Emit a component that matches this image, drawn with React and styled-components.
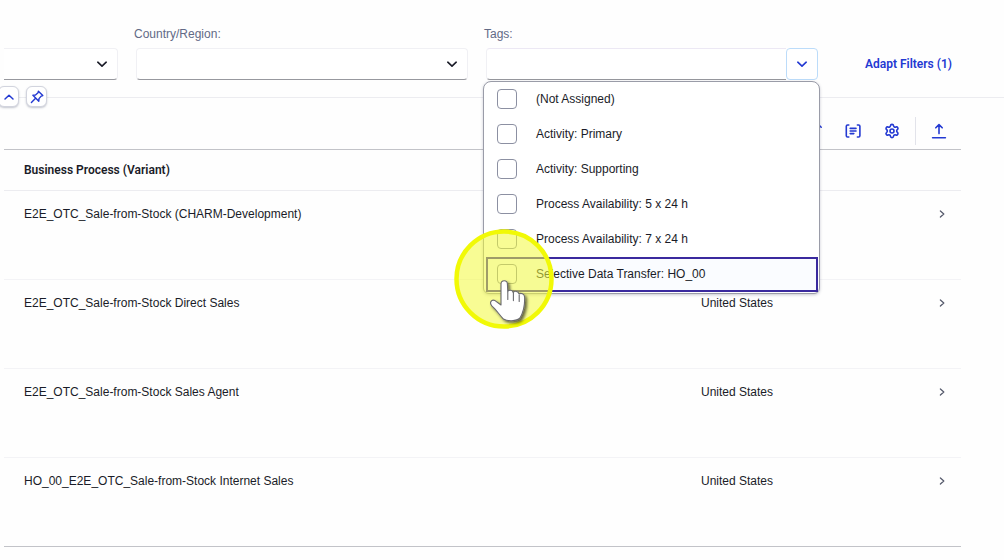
import React from "react";
import styled, { createGlobalStyle, css } from "styled-components";
import { Settings } from "lucide-react";

const color = {
  text: "#1a1c28",
  label: "#626a86",
  blue: "#2339d2",
  line: "#ececf0",
  strong: "#c2c3c8",
};

const strongFont = 'Roboto, "Liberation Sans", sans-serif';

const GlobalStyle = createGlobalStyle`
  *, *::before, *::after { box-sizing: border-box; }
  body {
    margin: 0;
    background: #fefefe;
    color: ${color.text};
    font: 12px/16px "Liberation Sans", Arial, sans-serif;
  }
  button, input, select { font: inherit; color: inherit; margin: 0; padding: 0; }
`;

const Page = styled.main`
  padding-left: 4px;
  overflow: hidden;
`;

const FilterBar = styled.form`
  position: relative;
  display: grid;
  grid-template-columns: 114px 1fr 1fr 168px;
  column-gap: 18px;
  align-items: end;
  padding: 26px 0 17px;
  border-bottom: 1px solid ${color.line};
`;

const Field = styled.div`
  display: flex;
  flex-direction: column;
  gap: 6px;
`;

const Label = styled.label`
  margin-left: -2px;
  color: ${color.label};
`;

const Control = styled.div`
  position: relative;
  display: flex;
  height: 32px;
`;

const box = css`
  flex: 1;
  min-width: 0;
  height: 32px;
  appearance: none;
  background: #fff;
  border: 1px solid #f0f0f4;
  border-bottom-color: #97989e;
  border-radius: 4px;
  outline: none;
`;

const Select = styled.select`
  ${box}
  ${(p) => p.$cut && "border-left: 0; border-radius: 0 4px 4px 0;"}
`;

const TextInput = styled.input`
  ${box}
  border-top-color: #ece8f4;
  border-radius: 4px 0 0 4px;
  border-right: 0;
`;

const ArrowButton = styled.button`
  display: grid;
  place-items: center;
  width: 32px;
  height: 32px;
  background: #fff;
  border: 1px solid #bcdcfa;
  border-radius: 4px;
  color: ${color.blue};
`;

const LinkButton = styled.button`
  justify-self: start;
  height: 32px;
  margin-left: 29px;
  border: 0;
  background: none;
  color: ${color.blue};
  font-family: ${strongFont};
  font-weight: 600;
  white-space: nowrap;
`;

const HeaderToggles = styled.div`
  position: absolute;
  left: -6px;
  bottom: -10px;
  display: flex;
  gap: 7px;
`;

const ToggleButton = styled.button`
  display: grid;
  place-items: center;
  width: 21px;
  height: 21px;
  border: 1px solid #d2d4de;
  border-radius: 6px;
  background: #fff;
  box-shadow: 0 1px 2px rgba(60, 70, 100, 0.3);
  color: ${color.blue};
`;

const Popup = styled.ul`
  position: absolute;
  z-index: 2;
  top: 33px;
  left: -3px;
  right: -2px;
  margin: 0;
  padding: 0 1px 1px 2px;
  list-style: none;
  background: #fff;
  border: 1px solid #9a9ca8;
  border-radius: 8px 8px 6px 6px;
  box-shadow: 0 1px 3px rgba(40, 45, 80, 0.25);
`;

const Option = styled.li`
  height: 35px;
  border: 2px solid ${(p) => (p.$focused ? "#3a2a9e" : "transparent")};
  background: ${(p) => (p.$focused ? "#fafcff" : "transparent")};
`;

const OptionLabel = styled.label`
  display: flex;
  align-items: center;
  gap: 19px;
  height: 100%;
  padding: 0 0 2px 9px;
`;

const CheckBox = styled.input`
  appearance: none;
  width: 20px;
  height: 20px;
  border: 1px solid #8c90a2;
  border-radius: 4px;
  background: #fff;
`;

const Pointer = styled.svg`
  position: absolute;
  left: -30px;
  bottom: -36px;
  pointer-events: none;
`;

const TableArea = styled.section`
  margin-right: 43px;
`;

const Toolbar = styled.div`
  display: flex;
  justify-content: flex-end;
  align-items: center;
  height: 52px;
  padding: 14px 11px 0 0;
  border-bottom: 1px solid ${color.strong};
`;

const ToolButton = styled.button`
  display: grid;
  place-items: center;
  width: 22px;
  height: 28px;
  border: 0;
  background: none;
  color: ${color.blue};
  & + & { margin-left: 17px; }
`;

const Divider = styled.span`
  width: 1px;
  height: 28px;
  margin: 0 12px;
  background: #e2e3ea;
`;

const Table = styled.table`
  width: 100%;
  table-layout: fixed;
  border-collapse: separate;
  border-spacing: 0;
`;

const HeadCell = styled.th`
  height: 41px;
  padding: 0 0 0 20px;
  border-bottom: 1px solid ${color.line};
  text-align: left;
  font-family: ${strongFont};
  font-weight: 600;
`;

const Row = styled.tr`
  td { border-bottom: 1px solid #f3f3f6; }
  &:last-child td { border-bottom-color: ${color.strong}; }
`;

const Cell = styled.td`
  height: 89px;
  padding: 15px 0 0;
  vertical-align: top;
  &:first-child { padding-left: 20px; }
`;

const RowButton = styled.button`
  display: grid;
  place-items: center;
  width: 16px;
  height: 16px;
  border: 0;
  background: none;
  color: #565a6c;
`;

const Icon = ({ width, height = width, stroke = 1.5, children, className }) => (
  <svg
    className={className}
    width={width}
    height={height}
    viewBox={`0 0 ${width} ${height}`}
    fill="none"
    stroke="currentColor"
    strokeWidth={stroke}
    strokeLinecap="round"
    strokeLinejoin="round"
    aria-hidden="true"
  >
    {children}
  </svg>
);

const ChevronDown = ({ className }) => (
  <Icon width={12} stroke={1.6} className={className}>
    <path d="M1.8 4.2 6 8.2 10.2 4.2" />
  </Icon>
);

const SelectArrow = styled(ChevronDown)`
  position: absolute;
  right: 10px;
  top: 10px;
  pointer-events: none;
`;

const ChevronUp = () => (
  <Icon width={12} stroke={1.5}>
    <path d="M2 8 6 4.2 10 8" />
  </Icon>
);

const ChevronRight = () => (
  <Icon width={10} stroke={1.3}>
    <path d="M3.4 2 6.8 5 3.4 8" />
  </Icon>
);

const PinIcon = () => (
  <Icon width={14} stroke={1.4}>
    <path d="M8.4 1.2 12.8 5.6 11.2 6.1 9 8.6 8.8 11.2 2.9 5.2 5.5 5 8 2.8Z" />
    <path d="M5.6 8.3 1.4 12.6" />
  </Icon>
);

const SortIcon = () => (
  <Icon width={16}>
    <path d="M4 2v12M1 11l3 3 3-3M12 14V1M8.8 4.2 12 1l3.2 3.2" />
  </Icon>
);

const GroupIcon = () => (
  <Icon width={16} height={14} stroke={1.6}>
    <path d="M3.8 1H2.6Q1.3 1 1.3 2.3v9.4Q1.3 13 2.6 13h1.2M12.4 1h1.2q1.3 0 1.3 1.3v9.4q0 1.3-1.3 1.3h-1.2M5.2 4.4h5.8M5.2 7h5.8M5.2 9.6h3.6" />
  </Icon>
);

const ExportIcon = () => (
  <Icon width={16} stroke={1.6}>
    <path d="M8 10.6V1.6M4.8 4.8 8 1.6l3.2 3.2M1.6 14.7h12.8" />
  </Icon>
);

const HandPointer = () => (
  <Pointer width="100" height="100" viewBox="0 0 100 100" aria-hidden="true">
    <defs>
      <filter id="hand-shadow" x="-30%" y="-30%" width="170%" height="170%">
        <feDropShadow dx="2" dy="2" stdDeviation="1.5" floodColor="#000" floodOpacity="0.6" />
      </filter>
    </defs>
    <circle cx="50" cy="50" r="47.5" fill="#f2fa3c" fillOpacity="0.55" stroke="#f1f906" strokeWidth="4.5" />
    <g filter="url(#hand-shadow)" stroke="#6a6a6e" strokeWidth="1.1" strokeLinejoin="round" strokeLinecap="round">
      <path
        fill="#fff"
        d="M47 55C47 50.6 53.4 50.6 53.4 55L53.8 62.6C54.8 60.4 58.6 60.8 59.2 63.6 60.6 61.4 64.6 62.2 65 65 67 63.6 70.4 64.8 70.6 68 71 77 69.6 83 66 89 62.6 92.4 53 92.4 49.4 90 45.5 86 42 80.5 38 77.2 34.8 73.4 37.6 70 41 71.6L47 76Z"
      />
      <path fill="none" d="M53.8 63v7.4M59.4 64v7.6M65.2 66v6.4" />
    </g>
  </Pointer>
);

const options = [
  "(Not Assigned)",
  "Activity: Primary",
  "Activity: Supporting",
  "Process Availability: 5 x 24 h",
  "Process Availability: 7 x 24 h",
  "Selective Data Transfer: HO_00",
];

const rows = [
  ["E2E_OTC_Sale-from-Stock (CHARM-Development)", ""],
  ["E2E_OTC_Sale-from-Stock Direct Sales", "United States"],
  ["E2E_OTC_Sale-from-Stock Sales Agent", "United States"],
  ["HO_00_E2E_OTC_Sale-from-Stock Internet Sales", "United States"],
];

export default function App() {
  return (
    <>
      <GlobalStyle />
      <Page>
        <FilterBar onSubmit={(e) => e.preventDefault()}>
          <Field>
            <Control>
              <Select $cut aria-label="Filter" />
              <SelectArrow />
            </Control>
          </Field>
          <Field>
            <Label htmlFor="country">Country/Region:</Label>
            <Control>
              <Select id="country" />
              <SelectArrow />
            </Control>
          </Field>
          <Field>
            <Label htmlFor="tags">Tags:</Label>
            <Control>
              <TextInput id="tags" type="text" role="combobox" aria-expanded="true" aria-controls="tag-list" />
              <ArrowButton type="button" aria-label="Tags">
                <ChevronDown />
              </ArrowButton>
              <Popup id="tag-list">
                {options.map((name, i) => (
                  <Option key={name} $focused={i === options.length - 1}>
                    <OptionLabel>
                      <CheckBox type="checkbox" />
                      {name}
                    </OptionLabel>
                  </Option>
                ))}
                <li role="presentation">
                  <HandPointer />
                </li>
              </Popup>
            </Control>
          </Field>
          <LinkButton type="button">Adapt Filters (1)</LinkButton>
          <HeaderToggles>
            <ToggleButton type="button" aria-label="Collapse">
              <ChevronUp />
            </ToggleButton>
            <ToggleButton type="button" aria-label="Pin">
              <PinIcon />
            </ToggleButton>
          </HeaderToggles>
        </FilterBar>

        <TableArea>
          <Toolbar>
            <ToolButton aria-label="Sort"><SortIcon /></ToolButton>
            <ToolButton aria-label="Group"><GroupIcon /></ToolButton>
            <ToolButton aria-label="Settings"><Settings size={16} strokeWidth={2.4} /></ToolButton>
            <Divider />
            <ToolButton aria-label="Export"><ExportIcon /></ToolButton>
          </Toolbar>
          <Table>
            <colgroup>
              <col />
              <col width="233" />
              <col width="27" />
            </colgroup>
            <thead>
              <tr>
                <HeadCell scope="col">Business Process (Variant)</HeadCell>
                <HeadCell as="td" />
                <HeadCell as="td" />
              </tr>
            </thead>
            <tbody>
              {rows.map(([name, country]) => (
                <Row key={name}>
                  <Cell>{name}</Cell>
                  <Cell>{country}</Cell>
                  <Cell>
                    <RowButton aria-label={name}>
                      <ChevronRight />
                    </RowButton>
                  </Cell>
                </Row>
              ))}
            </tbody>
          </Table>
        </TableArea>
      </Page>
    </>
  );
}
